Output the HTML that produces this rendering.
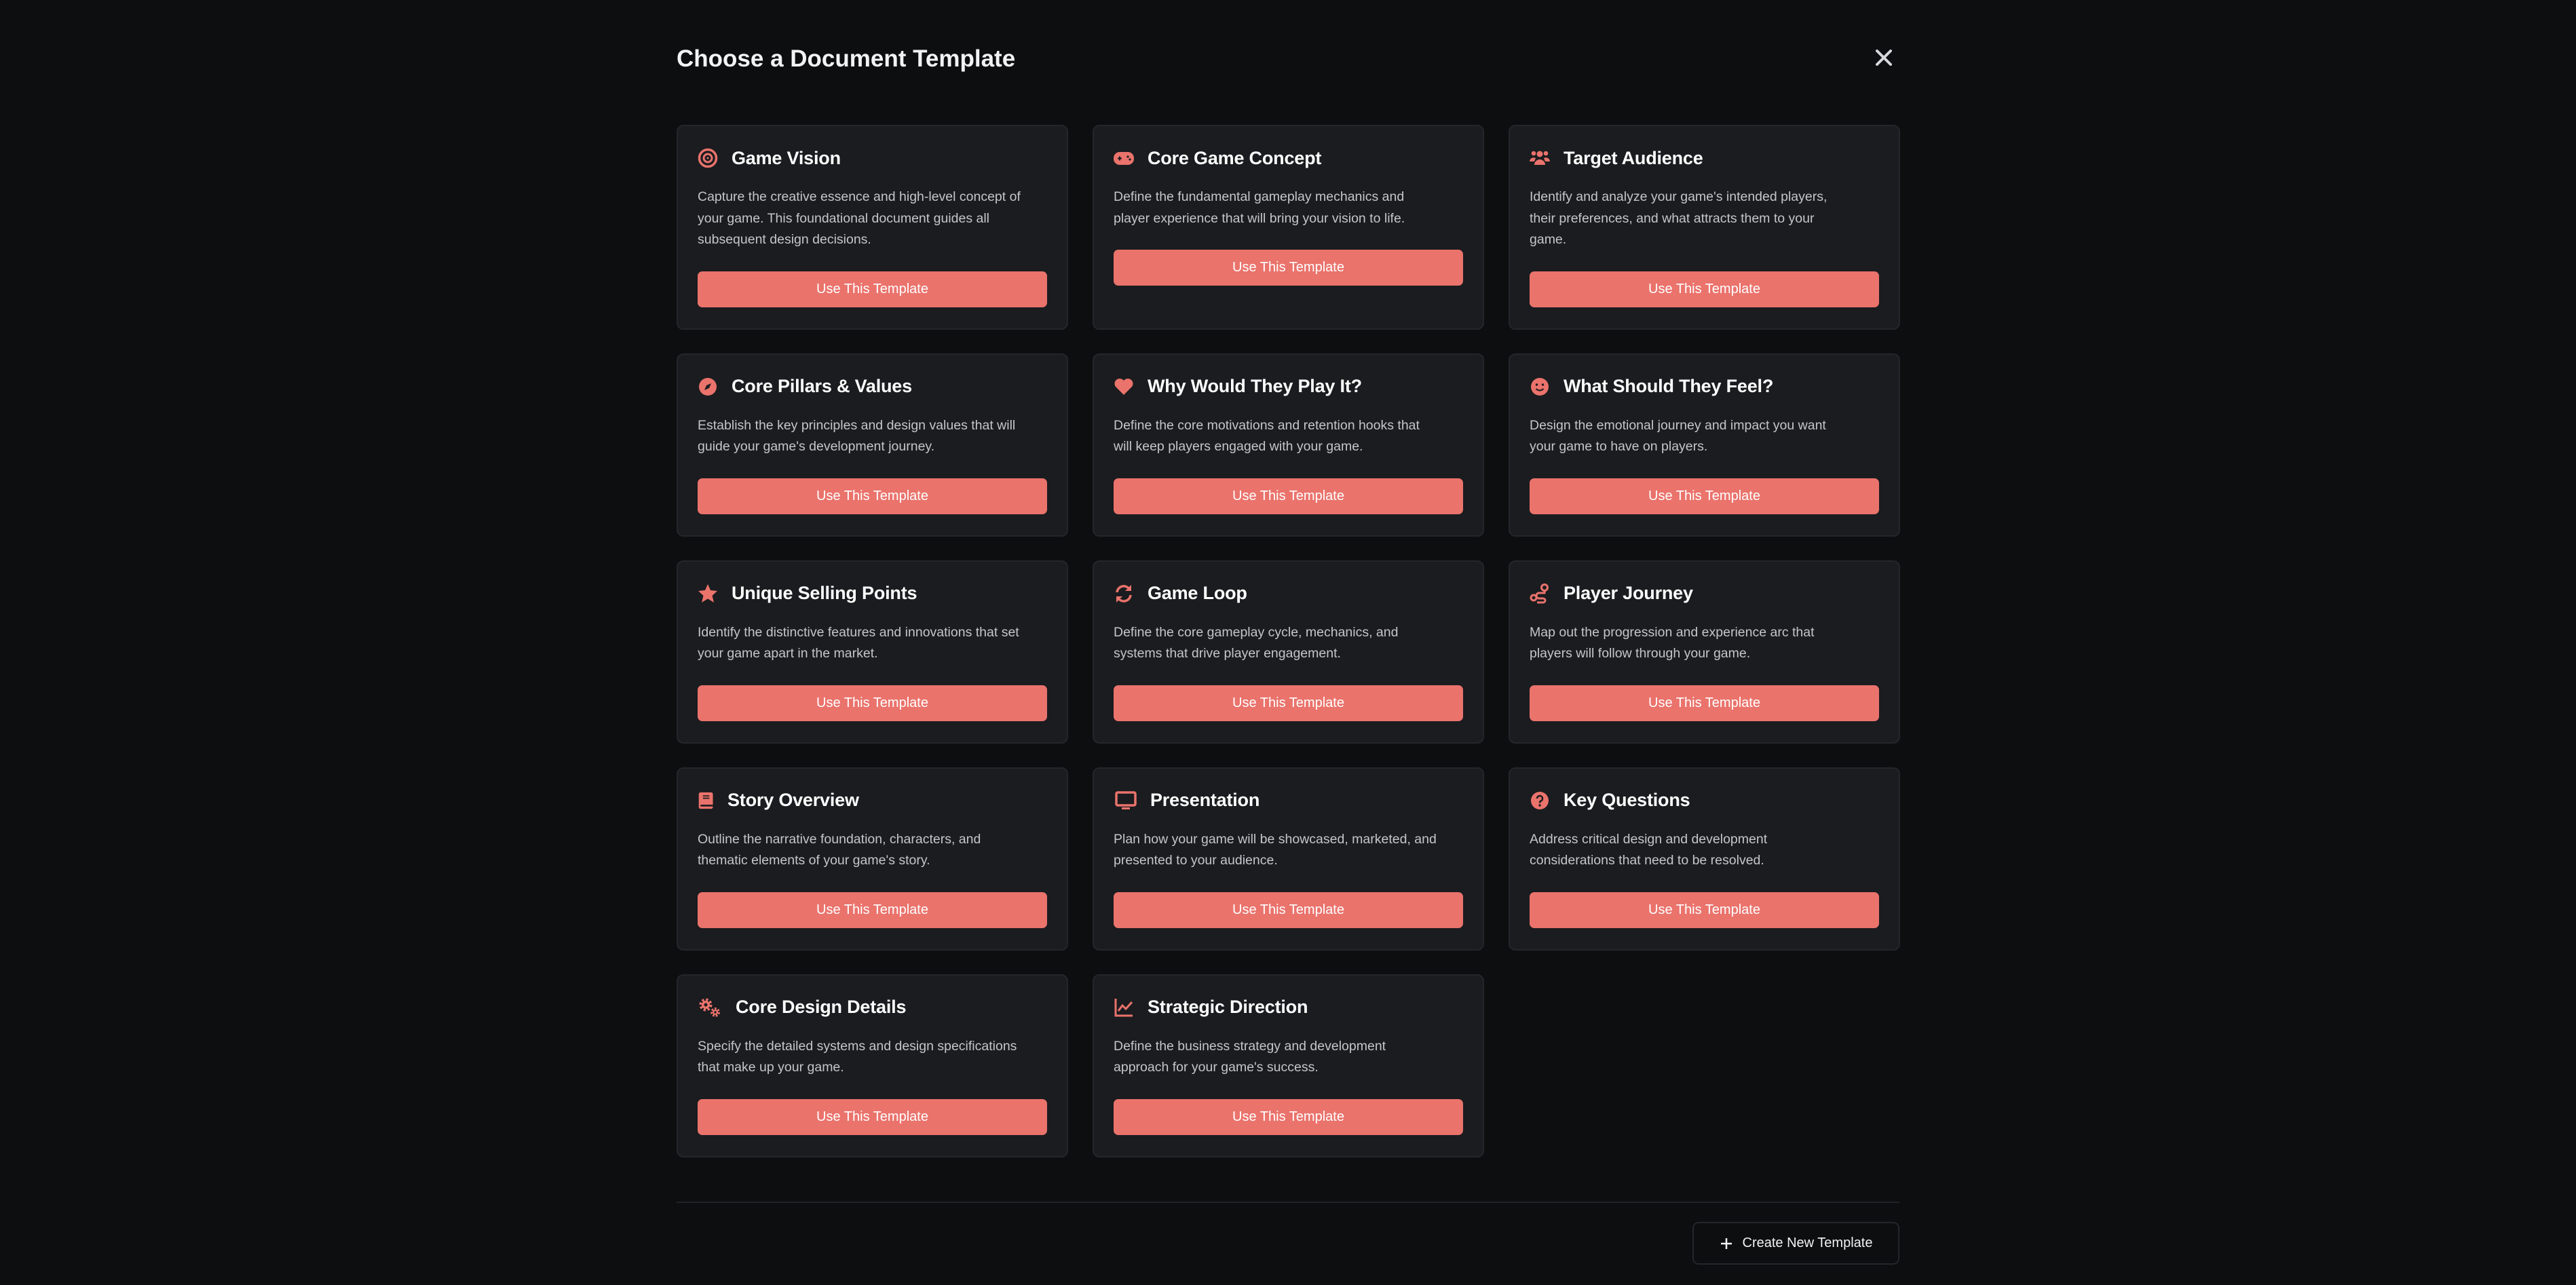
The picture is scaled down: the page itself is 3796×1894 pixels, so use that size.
<!DOCTYPE html>
<html><head><meta charset="utf-8"><style>
*{box-sizing:border-box;margin:0;padding:0}
html,body{width:3796px;height:1894px;background:#0d0e10;overflow:hidden;font-family:"Liberation Sans",sans-serif}
.title{position:absolute;left:997px;top:67px;font-size:35px;font-weight:bold;color:#f1f3f5}
.close{position:absolute;left:2762px;top:71px}
.grid{position:absolute;left:997px;top:184px;width:1802px;display:grid;grid-template-columns:577px 577px 577px;column-gap:36px;row-gap:35px}
.card{background:#1b1c1f;border:2px solid #25262a;border-radius:10px;padding:29px 29px 31px 29px;display:flex;flex-direction:column}
.h{height:36px;display:flex;align-items:center;font-size:27px;font-weight:bold;color:#fff;letter-spacing:-0.2px}
.h svg{width:30px;height:30px;margin-right:20px;flex:none}
.d{margin-top:24px;font-size:19.5px;line-height:31.5px;color:#c3c6cc;white-space:nowrap}
.b{margin-top:30px;height:53px;background:#ea736c;border-radius:7px;color:#fff;font-size:20px;display:flex;align-items:center;justify-content:center}
.hr{position:absolute;left:997px;top:1771px;width:1802px;height:2px;background:#222327}
.cn{position:absolute;left:2494px;top:1801px;width:305px;height:63px;border:2px solid #25262a;border-radius:9px;display:flex;align-items:center;justify-content:center;color:#f1f3f5;font-size:20px}
</style></head><body>
<div class="title">Choose a Document Template</div>
<svg class="close" width="28" height="28" viewBox="0 0 28 28"><path d="M4 4L24 24M24 4L4 24" stroke="#d6d8dc" stroke-width="4" stroke-linecap="round"/></svg>
<div class="grid">
<div class="card"><div class="h"><svg viewBox="0 0 30 30"><circle cx="15" cy="15" r="12.5" fill="none" stroke="#ea736c" stroke-width="3.5"/><circle cx="15" cy="15" r="6" fill="none" stroke="#ea736c" stroke-width="3"/><circle cx="15" cy="15" r="1.5" fill="#ea736c"/></svg>Game Vision</div><div class="d">Capture the creative essence and high-level concept of<br>your game. This foundational document guides all<br>subsequent design decisions.</div><div class="b">Use This Template</div></div>
<div class="card"><div class="h"><svg viewBox="0 0 30 30"><rect x="0" y="6" width="30" height="19" rx="9" fill="#ea736c"/><path d="M6 15.5h6M9 12.5v6" stroke="#1b1c1f" stroke-width="2"/><circle cx="21" cy="13" r="1.6" fill="#1b1c1f"/><circle cx="24" cy="17" r="1.6" fill="#1b1c1f"/></svg>Core Game Concept</div><div class="d">Define the fundamental gameplay mechanics and<br>player experience that will bring your vision to life.</div><div class="b">Use This Template</div></div>
<div class="card"><div class="h"><svg viewBox="0 0 30 30"><circle cx="15" cy="9" r="4.5" fill="#ea736c"/><circle cx="6" cy="8" r="3.3" fill="#ea736c"/><circle cx="24" cy="8" r="3.3" fill="#ea736c"/><path d="M7 25a8 8 0 0 1 16 0z" fill="#ea736c"/><path d="M0 20a6 6 0 0 1 9-5l-2 5z M30 20a6 6 0 0 0-9-5l2 5z" fill="#ea736c"/></svg>Target Audience</div><div class="d">Identify and analyze your game's intended players,<br>their preferences, and what attracts them to your<br>game.</div><div class="b">Use This Template</div></div>

<div class="card"><div class="h"><svg viewBox="0 0 30 30"><circle cx="15" cy="15" r="13" fill="#ea736c"/><path d="M20 10l-3 7-7 3 3-7z" fill="#1b1c1f"/></svg>Core Pillars &amp; Values</div><div class="d">Establish the key principles and design values that will<br>guide your game's development journey.</div><div class="b">Use This Template</div></div>
<div class="card"><div class="h"><svg viewBox="0 0 30 30"><path d="M15 27L3 15A6.5 6.5 0 0 1 15 6a6.5 6.5 0 0 1 12 9z" fill="#ea736c"/></svg>Why Would They Play It?</div><div class="d">Define the core motivations and retention hooks that<br>will keep players engaged with your game.</div><div class="b">Use This Template</div></div>
<div class="card"><div class="h"><svg viewBox="0 0 30 30"><circle cx="15" cy="15" r="13" fill="#ea736c"/><circle cx="10.5" cy="12" r="1.7" fill="#1b1c1f"/><circle cx="19.5" cy="12" r="1.7" fill="#1b1c1f"/><path d="M9.5 18q5.5 5 11 0" stroke="#1b1c1f" stroke-width="2" fill="none"/></svg>What Should They Feel?</div><div class="d">Design the emotional journey and impact you want<br>your game to have on players.</div><div class="b">Use This Template</div></div>

<div class="card"><div class="h"><svg viewBox="0 0 30 30"><path d="M15 1l4 9 10 1-7.5 7 2.5 10-9-5.5-9 5.5 2.5-10L1 11l10-1z" fill="#ea736c"/></svg>Unique Selling Points</div><div class="d">Identify the distinctive features and innovations that set<br>your game apart in the market.</div><div class="b">Use This Template</div></div>
<div class="card"><div class="h"><svg viewBox="0 0 30 30"><path d="M5 13a10 10 0 0 1 18-5M25 17a10 10 0 0 1-18 5" stroke="#ea736c" stroke-width="3.5" fill="none"/><path d="M26 2v9h-9z M4 28v-9h9z" fill="#ea736c"/></svg>Game Loop</div><div class="d">Define the core gameplay cycle, mechanics, and<br>systems that drive player engagement.</div><div class="b">Use This Template</div></div>
<div class="card"><div class="h"><svg viewBox="0 0 30 30"><circle cx="22" cy="6" r="4.5" fill="none" stroke="#ea736c" stroke-width="3"/><circle cx="6" cy="21" r="4" fill="none" stroke="#ea736c" stroke-width="3"/><path d="M22 11v3h-8a4 4 0 0 0 0 8h6a3 3 0 0 1 0 6h-9" stroke="#ea736c" stroke-width="3" fill="none"/></svg>Player Journey</div><div class="d">Map out the progression and experience arc that<br>players will follow through your game.</div><div class="b">Use This Template</div></div>

<div class="card"><div class="h"><svg viewBox="0 0 30 30" style="width:26px;margin-right:18px"><rect x="2" y="1" width="24" height="28" rx="3" fill="#ea736c"/><path d="M9 7h11M9 11h11" stroke="#1b1c1f" stroke-width="2"/><rect x="5" y="22" width="21" height="3" fill="#1b1c1f"/></svg>Story Overview</div><div class="d">Outline the narrative foundation, characters, and<br>thematic elements of your game's story.</div><div class="b">Use This Template</div></div>
<div class="card"><div class="h"><svg viewBox="0 0 30 30" style="width:34px"><rect x="2" y="3" width="28" height="19" rx="2" fill="none" stroke="#ea736c" stroke-width="3.5"/><rect x="10" y="25" width="12" height="3" fill="#ea736c"/></svg>Presentation</div><div class="d">Plan how your game will be showcased, marketed, and<br>presented to your audience.</div><div class="b">Use This Template</div></div>
<div class="card"><div class="h"><svg viewBox="0 0 30 30"><circle cx="15" cy="15" r="13" fill="#ea736c"/><path d="M11 12a4 4 0 1 1 5.5 3.7c-1.2.6-1.5 1.3-1.5 2.8" stroke="#1b1c1f" stroke-width="2.6" fill="none"/><circle cx="15" cy="22" r="1.7" fill="#1b1c1f"/></svg>Key Questions</div><div class="d">Address critical design and development<br>considerations that need to be resolved.</div><div class="b">Use This Template</div></div>

<div class="card"><div class="h"><svg viewBox="0 0 34 30" style="width:36px"><circle cx="11" cy="11" r="7" fill="none" stroke="#ea736c" stroke-width="5" stroke-dasharray="3 2.5"/><circle cx="11" cy="11" r="6" fill="#ea736c"/><circle cx="11" cy="11" r="2.5" fill="#1b1c1f"/><circle cx="25" cy="22" r="5" fill="none" stroke="#ea736c" stroke-width="4" stroke-dasharray="2.5 2"/><circle cx="25" cy="22" r="4" fill="#ea736c"/><circle cx="25" cy="22" r="1.7" fill="#1b1c1f"/></svg>Core Design Details</div><div class="d">Specify the detailed systems and design specifications<br>that make up your game.</div><div class="b">Use This Template</div></div>
<div class="card"><div class="h"><svg viewBox="0 0 30 30"><path d="M3 2v25h25" stroke="#ea736c" stroke-width="3" fill="none"/><path d="M7 20l6-8 5 5 9-10" stroke="#ea736c" stroke-width="3" fill="none"/></svg>Strategic Direction</div><div class="d">Define the business strategy and development<br>approach for your game's success.</div><div class="b">Use This Template</div></div>
</div>
<div class="hr"></div>
<div class="cn"><svg width="20" height="20" viewBox="0 0 20 20" style="margin-right:14px"><path d="M10 2v16M2 10h16" stroke="#f1f3f5" stroke-width="2.5"/></svg>Create New Template</div>
</body></html>
